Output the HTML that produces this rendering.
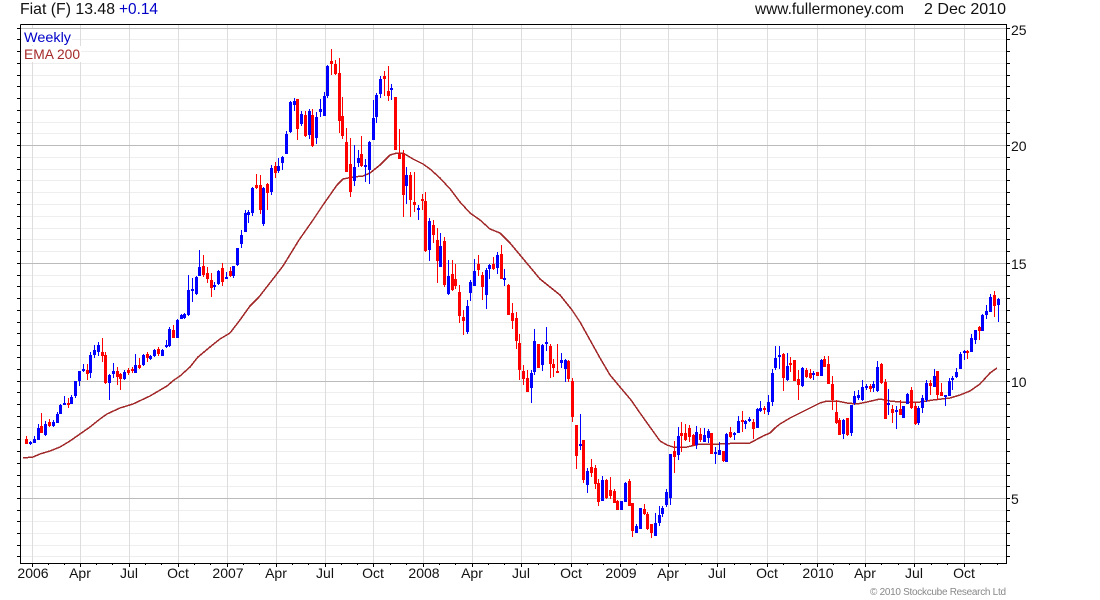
<!DOCTYPE html>
<html lang="en">
<head>
<meta charset="utf-8">
<title>Fiat (F) Weekly</title>
<style>
html,body{margin:0;padding:0;background:#fff;width:1100px;height:600px;overflow:hidden}
svg{display:block;font-family:"Liberation Sans",Arial,sans-serif}
</style>
</head>
<body>
<svg width="1100" height="600" viewBox="0 0 1100 600" xmlns="http://www.w3.org/2000/svg">
<rect width="1100" height="600" fill="#fff"/>
<g shape-rendering="crispEdges" fill="none">
<path stroke="#eee" transform="translate(0,.5)" d="M20 39H1006M20 51H1006M20 63H1006M20 75H1006M20 86H1006M20 98H1006M20 110H1006M20 122H1006M20 133H1006M20 157H1006M20 169H1006M20 180H1006M20 192H1006M20 204H1006M20 216H1006M20 228H1006M20 239H1006M20 251H1006M20 275H1006M20 286H1006M20 298H1006M20 310H1006M20 322H1006M20 333H1006M20 345H1006M20 357H1006M20 369H1006M20 392H1006M20 404H1006M20 416H1006M20 427H1006M20 439H1006M20 451H1006M20 463H1006M20 475H1006M20 486H1006M20 510H1006M20 521H1006M20 533H1006M20 545H1006M20 556H1006"/>
<path stroke="#ddd" transform="translate(.5,0)" d="M32 24V563M80 24V563M129 24V563M178 24V563M227 24V563M276 24V563M325 24V563M373 24V563M423 24V563M472 24V563M521 24V563M571 24V563M620 24V563M668 24V563M717 24V563M767 24V563M817 24V563M865 24V563M914 24V563M964 24V563"/>
<path stroke="#bbb" transform="translate(0,.5)" d="M20 28H1006M20 145H1006M20 263H1006M20 381H1006M20 498H1006"/>
<rect x="22" y="29" width="50" height="16" fill="#fff"/>
<rect x="22" y="46" width="59" height="16" fill="#fff"/>
<!-- axes -->
<path stroke="#000" transform="translate(.5,.5)" d="M20 24H1006V563H20V24"/>
<path stroke="#000" transform="translate(0,.5)" d="M17 28H20M17 39H20M17 51H20M17 63H20M17 75H20M17 86H20M17 98H20M17 110H20M17 122H20M17 133H20M17 145H20M17 157H20M17 169H20M17 180H20M17 192H20M17 204H20M17 216H20M17 228H20M17 239H20M17 251H20M17 263H20M17 275H20M17 286H20M17 298H20M17 310H20M17 322H20M17 333H20M17 345H20M17 357H20M17 369H20M17 381H20M17 392H20M17 404H20M17 416H20M17 427H20M17 439H20M17 451H20M17 463H20M17 475H20M17 486H20M17 498H20M17 510H20M17 521H20M17 533H20M17 545H20M17 556H20"/>
<path stroke="#000" transform="translate(0,.5)" d="M1006 28H1010M1006 39H1010M1006 51H1010M1006 63H1010M1006 75H1010M1006 86H1010M1006 98H1010M1006 110H1010M1006 122H1010M1006 133H1010M1006 145H1010M1006 157H1010M1006 169H1010M1006 180H1010M1006 192H1010M1006 204H1010M1006 216H1010M1006 228H1010M1006 239H1010M1006 251H1010M1006 263H1010M1006 275H1010M1006 286H1010M1006 298H1010M1006 310H1010M1006 322H1010M1006 333H1010M1006 345H1010M1006 357H1010M1006 369H1010M1006 381H1010M1006 392H1010M1006 404H1010M1006 416H1010M1006 427H1010M1006 439H1010M1006 451H1010M1006 463H1010M1006 475H1010M1006 486H1010M1006 498H1010M1006 510H1010M1006 521H1010M1006 533H1010M1006 545H1010M1006 556H1010"/>
<path stroke="#000" transform="translate(.5,0)" d="M32 563V567M80 563V567M129 563V567M178 563V567M227 563V567M276 563V567M325 563V567M373 563V567M423 563V567M472 563V567M521 563V567M571 563V567M620 563V567M668 563V567M717 563V567M767 563V567M817 563V567M865 563V567M914 563V567M964 563V567M48 563V565M64 563V565M96 563V565M112 563V565M145 563V565M161 563V565M194 563V565M210 563V565M243 563V565M259 563V565M292 563V565M308 563V565M341 563V565M357 563V565M390 563V565M406 563V565M439 563V565M455 563V565M488 563V565M504 563V565M538 563V565M554 563V565M587 563V565M603 563V565M636 563V565M652 563V565M685 563V565M701 563V565M734 563V565M750 563V565M783 563V565M800 563V565M833 563V565M849 563V565M881 563V565M898 563V565M931 563V565M947 563V565M980 563V565M997 563V565"/>
<!-- EMA 200 -->
<polyline stroke="#a02828" stroke-width="1.5" points="23,458 33,457 40,454 50,451 60,447 70,441 80,434 90,427 100,419 107,414 120,408 133,404 150,396 167,386 174,380 180,376 190,367 198,357 210,347 220,339 230,333 240,320 250,306 259,297 273,279 283,266 299,240 313,220 323,205 330,195 337,185 343,179 353,177 363,176 370,173 380,165 390,155 397,153 403,153 413,159 423,164 430,169 440,178 451,190 460,202 470,213 480,220 490,229 500,233 510,243 520,255 530,267 540,279 550,287 560,295 572,310 580,322 590,340 600,358 610,375 620,387 631,400 640,413 650,427 660,441 667,445 673,447 687,447 700,444 720,444 740,443 750,443 763,436 770,433 775,428 780,424 790,418 800,413 810,408 820,403 827,401 837,401 847,403 857,404 867,402 880,399 890,401 900,402 920,402 933,400 950,398 960,395 970,391 980,384 990,373 997,368"/>
<!-- blue candles -->
<g transform="translate(.5,0)" stroke="#00f">
<path stroke-width="1" d="M30 441V445M34 436V443M38 424V440M45 421V436M53 420V427M57 412V423M60 404V414M64 396V405M71 395V404M75 381V398M79 371V386M83 364V372M90 352V378M94 345V358M98 342V356M109 374V400M113 363V378M124 370V380M135 354V373M143 354V366M150 355V360M154 349V357M162 349V356M166 340V348M169 327V347M177 319V338M181 314V319M184 313V319M188 275V316M192 278V302M196 276V295M199 250V276M214 282V290M218 270V285M226 272V279M233 266V278M237 248V266M241 230V248M245 210V232M248 210V223M252 187V216M263 187V226M271 165V195M278 158V173M282 156V170M286 131V154M290 101V133M294 98V111M301 111V126M309 109V139M316 112V144M320 99V117M324 92V116M327 65V98M354 145V186M358 150V167M365 159V182M369 141V184M373 100V140M376 93V123M380 76V98M391 84V100M406 167V204M418 205V220M429 218V261M440 233V267M448 260V295M467 300V334M470 280V301M474 259V286M486 268V309M489 264V279M497 252V274M504 269V286M531 370V403M534 329V375M542 344V371M546 327V351M561 353V368M565 359V382M580 414V450M587 468V493M602 476V501M621 501V510M625 482V502M636 524V533M640 508V529M655 513V536M659 506V526M662 506V517M666 489V507M670 454V505M678 427V460M696 426V449M704 428V442M708 429V443M715 447V464M719 442V455M726 433V462M734 432V440M738 416V433M745 420V429M749 417V422M757 408V428M760 401V412M768 395V415M772 369V406M775 346V370M779 346V369M787 353V381M802 367V387M813 371V380M821 359V376M843 419V439M851 405V436M854 391V405M858 390V400M862 380V401M866 384V390M873 381V392M877 361V392M888 389V415M896 406V429M903 406V418M907 393V404M918 406V425M922 395V413M926 380V402M934 369V387M945 395V406M949 378V396M952 376V390M956 368V378M960 352V369M964 350V360M971 334V352M975 330V344M982 314V331M986 305V319M990 294V312M998 298V322"/>
<path stroke-width="3" d="M30 442V444M34 439V443M38 428V440M45 424V435M53 422V426M57 414V423M60 405V414M64 403V405M71 397V404M75 381V396M79 371V381M83 369V371M90 355V373M94 350V355M98 345V352M109 375V383M113 371V374M124 372V379M135 365V373M143 355V365M150 356V359M154 350V356M162 350V356M166 345V347M169 329V346M177 320V338M181 315V319M184 314V318M188 290V315M192 289V291M196 277V294M199 267V276M214 285V287M218 271V284M226 277V279M233 266V276M237 248V265M241 235V244M245 213V232M248 212V215M252 188V213M263 188V224M271 168V192M278 166V171M282 157V163M286 134V154M290 102V132M294 101V105M301 114V124M309 111V135M316 117V138M320 109V112M324 96V116M327 66V96M354 167V181M358 158V163M365 165V167M369 142V170M373 118V140M376 95V117M380 79V94M391 88V90M406 175V186M418 208V210M429 221V250M440 246V267M448 276V294M467 306V332M470 282V293M474 271V286M486 270V295M489 265V269M497 255V268M504 278V280M531 373V388M534 341V372M542 345V365M546 342V344M561 360V363M565 360V369M580 444V446M587 471V485M602 480V501M621 501V510M625 483V502M636 526V533M640 508V529M655 523V536M659 515V523M662 508V514M666 492V505M670 454V498M678 436V455M696 432V445M704 435V442M708 431V438M715 452V454M719 450V455M726 434V462M734 433V435M738 421V433M745 421V424M749 419V421M757 409V428M760 408V411M768 402V412M772 373V402M775 358V368M779 355V357M787 366V380M802 368V386M813 373V375M821 360V376M843 420V434M851 405V433M854 396V403M858 395V398M862 387V400M866 386V388M873 384V388M877 367V391M888 403V405M896 410V412M903 406V418M907 394V404M918 408V423M922 398V408M926 383V400M934 376V387M945 395V397M949 381V396M952 378V380M956 372V377M960 354V369M964 351V353M971 338V352M975 330V340M982 315V331M986 311V315M990 297V312M998 299V305"/>
</g>
<!-- red candles -->
<g transform="translate(.5,0)" stroke="#f00">
<path stroke-width="1" d="M26 436V444M41 413V433M49 419V427M68 398V408M87 364V380M102 338V362M105 352V384M117 367V385M120 373V390M128 368V375M132 367V373M139 358V369M147 352V362M158 347V356M173 325V338M203 255V277M207 267V283M211 273V297M222 263V286M230 267V277M256 174V189M260 175V214M267 183V210M275 162V178M297 99V140M305 111V137M312 109V147M331 49V75M335 60V75M339 58V133M342 97V139M346 128V172M350 138V197M361 136V167M384 71V96M388 66V101M395 97V150M399 129V159M403 150V217M410 172V217M414 172V212M422 194V210M425 192V252M433 220V243M437 228V283M444 237V287M452 260V291M455 264V289M459 285V323M463 310V335M478 255V276M482 272V300M493 257V270M501 245V279M508 284V315M512 303V329M516 312V349M519 334V380M523 365V385M527 370V392M538 344V368M550 344V378M553 359V377M557 344V373M568 360V382M572 378V422M576 425V469M583 440V483M591 459V477M595 465V489M598 479V506M606 479V499M610 477V499M614 489V503M617 500V510M629 479V506M632 503V537M644 504V515M647 512V530M651 524V538M674 441V473M681 422V452M685 424V441M689 425V442M693 434V446M700 428V442M711 433V454M723 451V462M730 427V438M742 411V432M753 419V439M764 406V414M783 353V391M790 357V372M794 360V381M798 370V400M806 368V378M810 369V379M817 372V376M824 356V367M828 356V384M832 376V410M836 400V424M839 418V435M847 418V436M870 384V392M881 363V384M885 379V419M892 405V423M900 400V415M911 387V409M915 402V425M930 380V395M937 371V400M941 383V396M967 350V359M979 326V340M994 291V317"/>
<path stroke-width="3" d="M26 439V444M41 426V433M49 422V426M68 403V405M87 370V374M102 352V356M105 355V383M117 371V377M120 374V379M128 370V373M132 369V371M139 365V368M147 354V358M158 349V354M173 330V338M203 266V275M207 273V279M211 280V288M222 268V282M230 271V276M256 185V188M260 185V210M267 184V193M275 166V173M297 99V129M305 115V136M312 115V146M331 61V64M335 64V74M339 73V121M342 116V136M346 142V172M350 164V192M361 154V166M384 76V79M388 91V96M395 97V150M399 154V159M403 154V195M410 175V200M414 202V205M422 199V201M425 201V251M433 225V235M437 240V261M444 241V285M452 274V290M455 279V286M459 292V316M463 317V321M478 264V270M482 275V287M493 264V269M501 254V279M508 285V315M512 313V321M516 318V341M519 343V370M523 371V379M527 378V392M538 344V368M550 346V364M553 364V368M557 371V373M568 361V379M572 381V417M576 425V456M583 440V480M591 467V473M595 468V484M598 483V502M606 480V498M610 490V496M614 491V503M617 501V510M629 481V506M632 503V531M644 509V514M647 514V529M651 524V533M674 451V457M681 433V436M685 433V440M689 428V437M693 435V445M700 434V440M711 433V454M723 451V461M730 432V437M742 420V422M753 422V429M764 408V410M783 354V378M790 363V365M794 360V381M798 379V385M806 370V377M810 373V378M817 372V376M824 359V367M828 364V384M832 384V400M836 412V423M839 420V435M847 418V435M870 386V389M881 364V383M885 382V419M892 409V413M900 409V415M911 390V408M915 406V424M930 383V386M937 371V395M941 392V396M967 351V353M979 327V331M994 295V306"/>
</g>
</g>
<!-- header -->
<text x="20" y="14" font-size="16" fill="#111" textLength="95" lengthAdjust="spacingAndGlyphs">Fiat (F) 13.48</text>
<text x="119" y="14" font-size="16" fill="#0000c8" textLength="39" lengthAdjust="spacingAndGlyphs">+0.14</text>
<text x="755" y="14" font-size="16" fill="#111" textLength="149" lengthAdjust="spacingAndGlyphs">www.fullermoney.com</text>
<text x="924" y="14" font-size="16" fill="#111" textLength="82" lengthAdjust="spacingAndGlyphs">2 Dec 2010</text>
<!-- legend -->
<text x="24" y="42" font-size="14" fill="#0000c8" textLength="47" lengthAdjust="spacingAndGlyphs">Weekly</text>
<text x="24" y="59" font-size="14" fill="#a52a2a" textLength="56" lengthAdjust="spacingAndGlyphs">EMA 200</text>
<!-- y labels -->
<g font-size="14" fill="#111">
<text x="1011" y="35">25</text>
<text x="1011" y="151">20</text>
<text x="1011" y="269">15</text>
<text x="1011" y="387">10</text>
<text x="1011" y="504">5</text>
</g>
<!-- x labels -->
<g font-size="14" fill="#111" text-anchor="middle">
<text x="33" y="578">2006</text>
<text x="80" y="578">Apr</text>
<text x="129" y="578">Jul</text>
<text x="178" y="578">Oct</text>
<text x="228" y="578">2007</text>
<text x="276" y="578">Apr</text>
<text x="325" y="578">Jul</text>
<text x="373" y="578">Oct</text>
<text x="424" y="578">2008</text>
<text x="472" y="578">Apr</text>
<text x="521" y="578">Jul</text>
<text x="571" y="578">Oct</text>
<text x="621" y="578">2009</text>
<text x="668" y="578">Apr</text>
<text x="717" y="578">Jul</text>
<text x="767" y="578">Oct</text>
<text x="818" y="578">2010</text>
<text x="865" y="578">Apr</text>
<text x="914" y="578">Jul</text>
<text x="964" y="578">Oct</text>
</g>
<text x="870" y="595" font-size="10" fill="#888" textLength="136" lengthAdjust="spacing">© 2010 Stockcube Research Ltd</text>
</svg>
</body>
</html>
